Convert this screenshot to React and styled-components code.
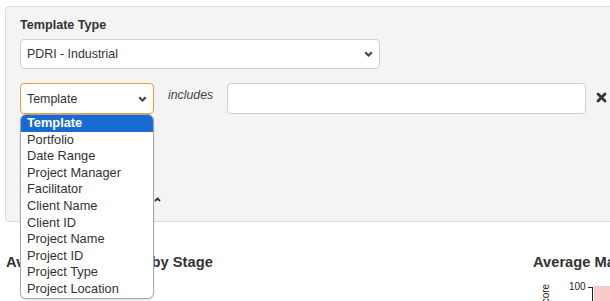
import React from "react";
import styled, { createGlobalStyle } from "styled-components";

const Global = createGlobalStyle`
  html, body { margin: 0; padding: 0; background: #fff; overflow: hidden; }
  body { font-family: "Liberation Sans", Arial, sans-serif; color: #333; }
`;

const Page = styled.div`
  position: relative;
  width: 610px;
  height: 301px;
  overflow: hidden;
  padding: 6px 0 0 5px;
  box-sizing: border-box;
`;

const FilterPanel = styled.section`
  width: 640px;
  height: 216px;
  box-sizing: border-box;
  background: #f4f4f4;
  border: 1px solid #dcdcdc;
  border-radius: 4px;
  padding: 11px 14px 0 14px;
  display: flex;
  flex-direction: column;
`;

const Label = styled.div`
  font-weight: bold;
  font-size: 12.6px;
  line-height: 14px;
  color: #333;
  margin-bottom: 7px;
`;

const SelectBox = styled.div`
  position: relative;
  width: ${(p) => p.$width}px;
  height: ${(p) => p.$height}px;
  box-sizing: border-box;
  background: #fff;
  border: 1px solid ${(p) => (p.$focus ? "#e9a23b" : "#cfcfcf")};
  border-radius: 4px;
  display: flex;
  align-items: center;
  padding: 0 6px;
  font-size: 12.4px;
  color: #333;
  flex-shrink: 0;
`;

const SelectText = styled.span`
  flex: 1;
`;

const Chevron = () => (
  <svg width="9" height="6" viewBox="0 0 9 6">
    <path d="M1.2 1.2 L4.5 4.5 L7.8 1.2" fill="none" stroke="#444" strokeWidth="2.1" />
  </svg>
);

const FilterRow = styled.div`
  display: flex;
  align-items: flex-start;
  margin-top: 14px;
`;

const Includes = styled.span`
  font-style: italic;
  font-size: 12.3px;
  color: #444;
  margin: 5px 14px 0 14px;
`;

const TextInput = styled.div`
  width: 359px;
  height: 31px;
  box-sizing: border-box;
  background: #fff;
  border: 1px solid #cfcfcf;
  border-radius: 4px;
  flex-shrink: 0;
`;

const RemoveButton = styled.span`
  margin: 9px 0 0 10px;
  display: flex;
`;

const CrossIcon = () => (
  <svg width="11" height="11" viewBox="0 0 11 11">
    <path d="M2 2 L9 9 M9 2 L2 9" stroke="#333" strokeWidth="2.8" strokeLinecap="round" />
  </svg>
);

const AddButton = styled.div`
  margin-top: 41px;
  width: 110px;
  height: 30px;
  background: #337ab7;
  border-radius: 4px;
  color: #fff;
  font-size: 12.3px;
  display: flex;
  align-items: center;
  padding-left: 10px;
  box-sizing: border-box;
`;

const ToggleRow = styled.div`
  margin-top: 10px;
  display: flex;
  align-items: center;
  height: 10px;
`;

const ToggleText = styled.span`
  display: inline-block;
  width: 132px;
  height: 10px;
  background: #f0ad4e;
  border-radius: 2px;
`;

const Caret = () => (
  <svg width="7" height="5" viewBox="0 0 7 5" style={{ marginLeft: 2, marginTop: -2 }}>
    <path d="M1 4 L3.5 1.5 L6 4" fill="none" stroke="#333" strokeWidth="1.8" />
  </svg>
);

const ChartsRow = styled.div`
  display: flex;
  width: 800px;
  margin-top: 32px;
`;

const ChartColumn = styled.div`
  width: ${(p) => p.$width}px;
  flex-shrink: 0;
`;

const ChartTitle = styled.h3`
  margin: 0 0 0 1px;
  font-size: 14.7px;
  line-height: 17px;
  font-weight: bold;
  color: #333;
  white-space: nowrap;
`;

const Popup = styled.ul`
  position: absolute;
  left: 20px;
  top: 114px;
  width: 134px;
  margin: 0;
  padding: 0;
  list-style: none;
  background: #fff;
  border: 1px solid #a9a9a9;
  border-radius: 6px;
  overflow: hidden;
  box-sizing: border-box;
  box-shadow: 0 1px 2px rgba(0, 0, 0, 0.15);
`;

const Option = styled.li`
  height: 16.6px;
  line-height: 16.6px;
  padding-left: 6px;
  font-size: 12.8px;
  color: ${(p) => (p.$active ? "#fff" : "#333")};
  background: ${(p) => (p.$active ? "#1a6ad6" : "transparent")};
  font-weight: ${(p) => (p.$active ? "bold" : "normal")};
  white-space: nowrap;
`;

const options = [
  "Template",
  "Portfolio",
  "Date Range",
  "Project Manager",
  "Facilitator",
  "Client Name",
  "Client ID",
  "Project Name",
  "Project ID",
  "Project Type",
  "Project Location",
];

export default function App() {
  return (
    <>
      <Global />
      <Page>
        <FilterPanel>
          <Label>Template Type</Label>
          <SelectBox $width={360} $height={30}>
            <SelectText>PDRI - Industrial</SelectText>
            <Chevron />
          </SelectBox>
          <FilterRow>
            <SelectBox $width={134} $height={31} $focus>
              <SelectText>Template</SelectText>
              <Chevron />
            </SelectBox>
            <Includes>includes</Includes>
            <TextInput />
            <RemoveButton>
              <CrossIcon />
            </RemoveButton>
          </FilterRow>
          <AddButton>Add Filter</AddButton>
          <ToggleRow>
            <ToggleText />
            <Caret />
          </ToggleRow>
        </FilterPanel>
        <ChartsRow>
          <ChartColumn $width={527}>
            <ChartTitle>Average PDRI Score by Stage</ChartTitle>
            <svg width="100" height="20" style={{ display: "block" }}>
              <line x1="46.5" y1="14" x2="46.5" y2="20" stroke="#333" strokeWidth="1" />
            </svg>
          </ChartColumn>
          <ChartColumn $width={273}>
            <ChartTitle>Average Maturity by Category</ChartTitle>
            <svg width="120" height="22" style={{ display: "block", marginTop: 11 }}>
              <text x="0" y="0" fontSize="10" fill="#222" fontFamily="Liberation Sans, Arial" transform="translate(17 28) rotate(-90)">Score</text>
              <text x="37" y="8" fontSize="10" fill="#222" fontFamily="Liberation Sans, Arial">100</text>
              <line x1="56" y1="5.5" x2="60.5" y2="5.5" stroke="#222" />
              <line x1="60.5" y1="5" x2="60.5" y2="22" stroke="#222" />
              <rect x="62" y="4" width="40" height="18" fill="#f8caca" />
            </svg>
          </ChartColumn>
        </ChartsRow>
        <Popup>
          {options.map((o, i) => (
            <Option key={o} $active={i === 0}>
              {o}
            </Option>
          ))}
        </Popup>
      </Page>
    </>
  );
}
